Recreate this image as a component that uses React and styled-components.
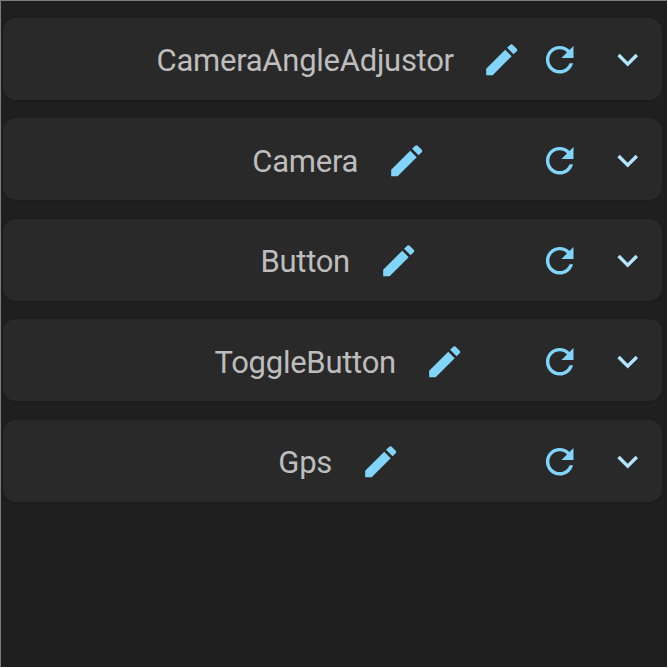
import React from 'react';
import styled, { createGlobalStyle } from 'styled-components';

const GlobalStyle = createGlobalStyle`
  * { box-sizing: border-box; }
  body { margin: 0; background: #fff; overflow: hidden; }
`;

const Panel = styled.main`
  width: 667px;
  height: 667px;
  padding: 17px 5px 0 2px;
  background: #1f1f1f;
  border-top: 1px solid #7b7d7c;
  border-left: 1px solid #7b7d7c;
  display: flex;
  flex-direction: column;
  gap: 18.6px;
  font-family: Roboto, sans-serif;
`;

const Card = styled.section`
  flex: none;
  height: 81.9px;
  padding: 1.6px 13.5px 0 0;
  border-radius: 13px;
  background: #292929;
  box-shadow: 0 1px 3px rgba(0, 0, 0, 0.12);
  display: flex;
  align-items: center;
`;

const Heading = styled.div`
  width: 368.4px;
  margin-left: 152.5px;
  display: flex;
  align-items: center;
  justify-content: center;
  gap: 27.6px;
`;

const Title = styled.h2`
  margin: 0;
  padding-top: 3px;
  font-size: 31px;
  line-height: 36px;
  font-weight: 400;
  letter-spacing: -0.27px;
  color: #bdbdbd;
  white-space: nowrap;
`;

const IconButton = styled.button`
  flex: none;
  width: 41.4px;
  height: 41.4px;
  padding: 0;
  border: 0;
  background: none;
  color: ${(p) => p.$color || '#81d4fa'};
  margin-left: ${(p) => p.$gap || '0'};
`;

const Icon = styled.svg`
  display: block;
  width: 100%;
  height: 100%;
  fill: currentColor;
`;

const PENCIL =
  'M3 17.25V21h3.75L17.81 9.94l-3.75-3.75L3 17.25zM20.71 7.04c.39-.39.39-1.02 0-1.41l-2.34-2.34c-.39-.39-1.02-.39-1.41 0l-1.83 1.83 3.75 3.75 1.83-1.83z';
const REFRESH =
  'M17.65 6.35C16.2 4.9 14.21 4 12 4c-4.42 0-7.99 3.58-7.99 8s3.57 8 7.99 8c3.73 0 6.84-2.55 7.73-6h-2.08c-.82 2.33-3.04 4-5.65 4-3.31 0-6-2.69-6-6s2.69-6 6-6c1.66 0 3.14.69 4.22 1.78L13 11h7V4l-2.35 2.35z';
const CHEVRON = 'M16.59 8.59L12 13.17 7.41 8.59 6 10l6 6 6-6z';

const Glyph = ({ d }) => (
  <Icon viewBox="0 0 24 24" aria-hidden="true">
    <path d={d} />
  </Icon>
);

const components = ['CameraAngleAdjustor', 'Camera', 'Button', 'ToggleButton', 'Gps'];

export default function App() {
  return (
    <>
      <GlobalStyle />
      <Panel>
        {components.map((name) => (
          <Card key={name}>
            <Heading>
              <Title>{name}</Title>
              <IconButton aria-label="Rename"><Glyph d={PENCIL} /></IconButton>
            </Heading>
            <IconButton aria-label="Reset" $gap="15px"><Glyph d={REFRESH} /></IconButton>
            <IconButton aria-label="Expand" $gap="26.5px" $color="#b3e5fc"><Glyph d={CHEVRON} /></IconButton>
          </Card>
        ))}
      </Panel>
    </>
  );
}
